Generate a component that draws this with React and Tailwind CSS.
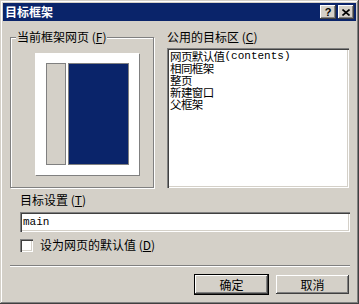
const raised =
  "shadow-[inset_-1px_-1px_#404040,inset_1px_1px_#ffffff,inset_-2px_-2px_#808080,inset_2px_2px_#d4d0c8]";
const sunken =
  "shadow-[inset_1px_1px_#808080,inset_2px_2px_#404040,inset_-1px_-1px_#ffffff,inset_-2px_-2px_#d4d0c8]";

const cjk = { fontFamily: '"Noto Sans CJK SC", "Noto Sans", sans-serif' };
const mono = { fontFamily: '"Liberation Mono", "DejaVu Sans Mono", monospace' };

function TitleButton({ children }) {
  return (
    <div className={`w-[16px] h-[14px] bg-[#d4d0c8] flex items-center justify-center ${raised}`}>
      {children}
    </div>
  );
}

function Button({ label, isDefault }) {
  return (
    <div className={isDefault ? "border border-black" : "border border-transparent"}>
      <div
        className={`w-[73px] h-[19px] bg-[#d4d0c8] flex items-center justify-center text-[12px] leading-none text-black ${raised}`}
        style={cjk}
      >
        {label}
      </div>
    </div>
  );
}

export default function App() {
  const targets = ["网页默认值", "相同框架", "整页", "新建窗口", "父框架"];

  return (
    <div
      className="w-[359px] h-[304px] bg-[#d4d0c8] p-[3px] shadow-[inset_-1px_-1px_#404040,inset_1px_1px_#d4d0c8,inset_-2px_-2px_#808080,inset_2px_2px_#ffffff] overflow-hidden"
      style={cjk}
    >
      {/* title bar */}
      <div className="h-[18px] bg-[#0a246a] flex items-center pl-[2px] pr-[2px]">
        <span className="text-white text-[12px] font-bold leading-none">目标框架</span>
        <div className="ml-auto flex gap-[2px]">
          <TitleButton>
            <span className="text-[11px] font-bold leading-none text-black" style={{ fontFamily: '"Liberation Sans", sans-serif' }}>?</span>
          </TitleButton>
          <TitleButton>
            <svg width="8" height="7" viewBox="0 0 8 7">
              <path d="M0.5 0.5 L7.5 6.5 M7.5 0.5 L0.5 6.5" stroke="#000" strokeWidth="1.6" />
            </svg>
          </TitleButton>
        </div>
      </div>

      <div className="pl-[7px] pt-[9px]">
        <div className="flex items-start">
          {/* current frame page group */}
          <div className="relative w-[144px] h-[158px]">
            <div className="mt-[7px] h-[151px] border border-[#808080] shadow-[1px_1px_0_#ffffff,inset_1px_1px_0_#ffffff] pt-[15px] pl-[24px]">
              <div className="w-[104px] h-[122px] bg-white pt-[10px] pl-[11px] flex gap-[2px] shadow-[1px_1px_0_#808080]">
                <div className="w-[20px] h-[102px] bg-[#d4d0c8] border border-[#808080]" />
                <div className="w-[61px] h-[102px] bg-[#0a246a] border border-[#808080]" />
              </div>
            </div>
            <span className="absolute top-0 left-[6px] px-[1px] bg-[#d4d0c8] text-[12px] leading-[14px] text-black">
              当前框架网页 (<u>F</u>)
            </span>
          </div>

          {/* public targets */}
          <div className="ml-[13px]">
            <div className="text-[12px] leading-[14px] text-black">
              公用的目标区 (<u>C</u>)
            </div>
            <div className={`mt-[4px] w-[182px] h-[140px] bg-white pt-[2px] pl-[3px] ${sunken}`}>
              {targets.map((t, i) => (
                <div key={t} className="h-[12px] flex items-center text-[11.5px] leading-[12px] text-black tracking-[-0.6px] whitespace-nowrap">
                  {t}
                  {i === 0 && (
                    <span className="text-[11px] tracking-normal" style={mono}>
                      (contents)
                    </span>
                  )}
                </div>
              ))}
            </div>
          </div>
        </div>

        {/* target setting */}
        <div className="pl-[10px]">
          <div className="mt-[5px] text-[12px] leading-[14px] text-black">
            目标设置 (<u>T</u>)
          </div>
          <div className={`mt-[5px] w-[330px] h-[20px] bg-white flex items-center pl-[3px] ${sunken}`}>
            <span className="text-[11px] text-black leading-none" style={mono}>
              main
            </span>
          </div>
          <div className="mt-[6px] flex items-center">
            <div className={`w-[13px] h-[13px] bg-white ${sunken}`} />
            <span className="ml-[7px] text-[12px] leading-[14px] text-black">
              设为网页的默认值 (<u>D</u>)
            </span>
          </div>
        </div>

        {/* separator */}
        <div className="mt-[13px] w-[340px] border-t border-[#808080] border-b border-b-white" />

        {/* buttons */}
        <div className="mt-[7px] flex justify-end gap-[6px] w-[340px]">
          <Button label="确定" isDefault />
          <Button label="取消" />
        </div>
      </div>
    </div>
  );
}
